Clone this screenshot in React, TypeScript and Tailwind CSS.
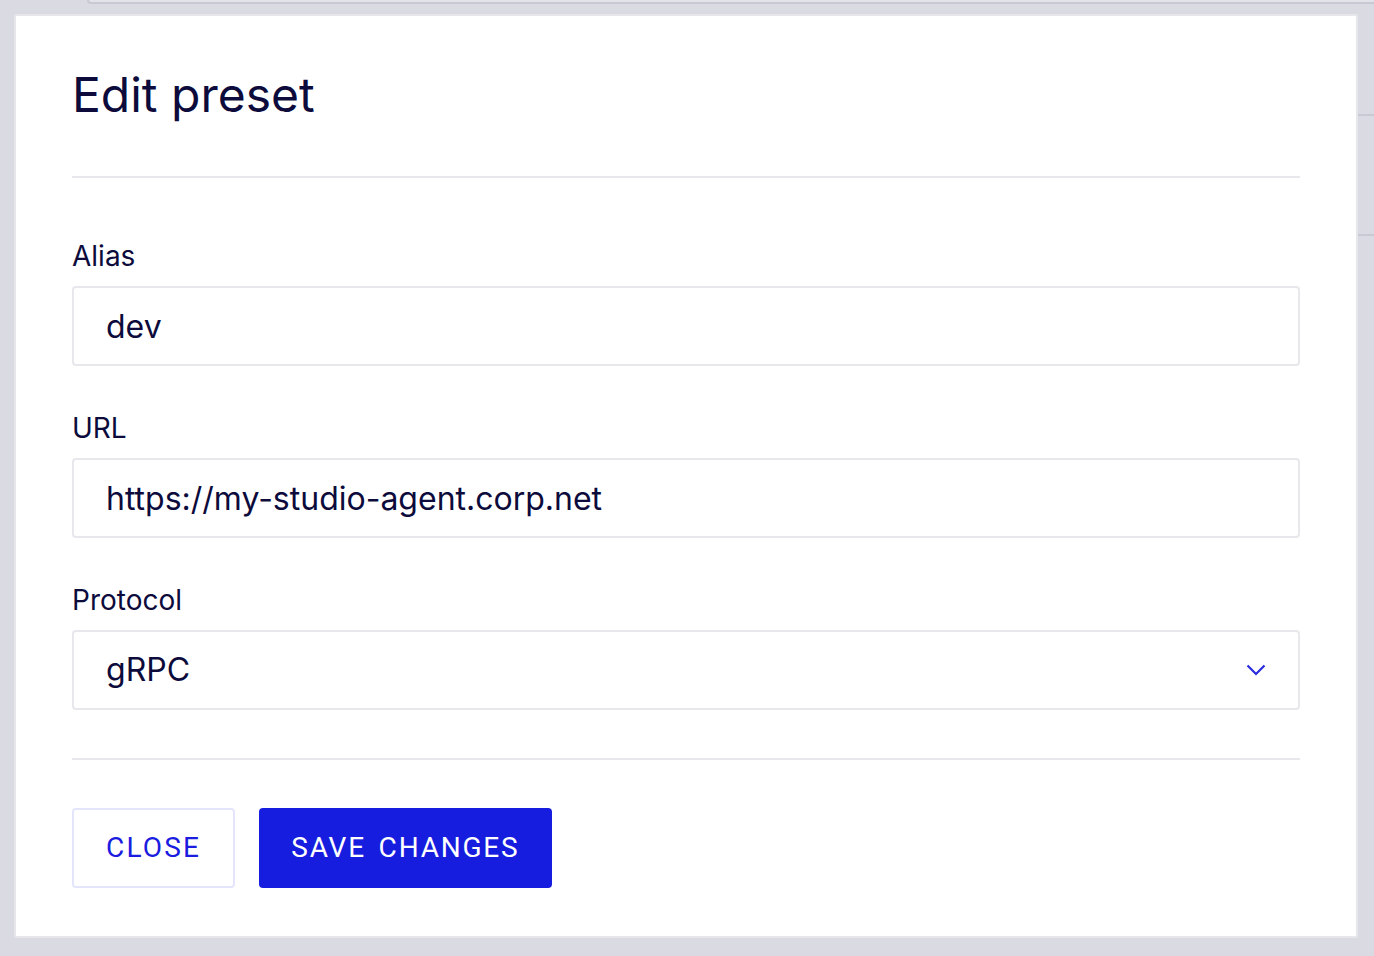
import React, { useState } from "react";

const font = { fontFamily: "Inter, 'Noto Sans', sans-serif" };

function Field({
  label,
  children,
}: Readonly<{ label: string; children: React.ReactNode }>) {
  return (
    <div className="flex flex-col">
      <label className="text-[28px] leading-[42px] text-[#0c0b3b]">{label}</label>
      <div className="mt-[9px]">{children}</div>
    </div>
  );
}

export default function App() {
  const [alias, setAlias] = useState("dev");
  const [url, setUrl] = useState("https://my-studio-agent.corp.net");
  const [protocol, setProtocol] = useState("gRPC");

  return (
    <div className="relative w-[1374px] h-[956px] overflow-hidden bg-[#dadae3]" style={font}>
      {/* page behind the dialog */}
      <div className="flex h-full">
        <div className="w-[87px]" />
        <div className="flex-1 flex flex-col">
          <div className="h-[4px] border-b-2 border-l-2 border-[#c9c9d3] rounded-bl-md bg-[#e2e2e9]" />
          <div className="flex-1 flex justify-end">
            <div className="w-[20px] flex flex-col">
              <div className="h-[112px] border-b-2 border-[#c9c9d3]" />
              <div className="h-[120px] border-b-2 border-[#c9c9d3]" />
            </div>
          </div>
        </div>
      </div>

      {/* dialog */}
      <div className="absolute left-[14px] top-[14px] w-[1344px] h-[924px] bg-white border-2 border-[#e7e7eb] rounded-[3px] px-[56px] pt-[50px] pb-[48px] flex flex-col">
        <h2 className="text-[48px] leading-[58px] text-[#0c0b3b] font-normal">Edit preset</h2>
        <div className="mt-[52px] h-[2px] bg-[#e8e8ec]" />

        <form
          className="mt-[57px] flex flex-col gap-[41px]"
          onSubmit={(e) => e.preventDefault()}
        >
          <Field label="Alias">
            <input
              value={alias}
              onChange={(e) => setAlias(e.target.value)}
              className="w-full h-[80px] border-2 border-[#e8e8ec] rounded-[4px] px-[32px] text-[32px] text-[#0c0b3b] outline-none"
            />
          </Field>
          <Field label="URL">
            <input
              value={url}
              onChange={(e) => setUrl(e.target.value)}
              className="w-full h-[80px] border-2 border-[#e8e8ec] rounded-[4px] px-[32px] text-[32px] text-[#0c0b3b] outline-none"
            />
          </Field>
          <Field label="Protocol">
            <div className="relative">
              <select
                value={protocol}
                onChange={(e) => setProtocol(e.target.value)}
                className="w-full h-[80px] appearance-none bg-white border-2 border-[#e8e8ec] rounded-[4px] px-[32px] text-[32px] text-[#0c0b3b] outline-none"
              >
                <option>gRPC</option>
                <option>REST</option>
              </select>
              <svg
                className="absolute right-[34px] top-[34px] pointer-events-none"
                width="20"
                height="12"
                viewBox="0 0 20 12"
                fill="none"
              >
                <path d="M1.5 1.5L10 10L18.5 1.5" stroke="#2a2ae0" strokeWidth="2.2" />
              </svg>
            </div>
          </Field>
        </form>

        <div className="mt-[48px] h-[2px] bg-[#e8e8ec]" />

        <div className="mt-[48px] flex gap-[24px]">
          <button
            type="button"
            className="h-[80px] px-[32px] border-2 border-[#e4e5fb] rounded-[4px] bg-white text-[#1a1cdf] text-[28px] tracking-[2.2px]"
            style={{ fontFamily: "Roboto, 'Liberation Sans', sans-serif" }}
          >
            CLOSE
          </button>
          <button
            type="button"
            className="h-[80px] px-[32px] rounded-[4px] bg-[#161ddf] text-white text-[28px] tracking-[1.8px] [word-spacing:4px]"
            style={{ fontFamily: "Roboto, 'Liberation Sans', sans-serif" }}
          >
            SAVE CHANGES
          </button>
        </div>
      </div>
    </div>
  );
}
